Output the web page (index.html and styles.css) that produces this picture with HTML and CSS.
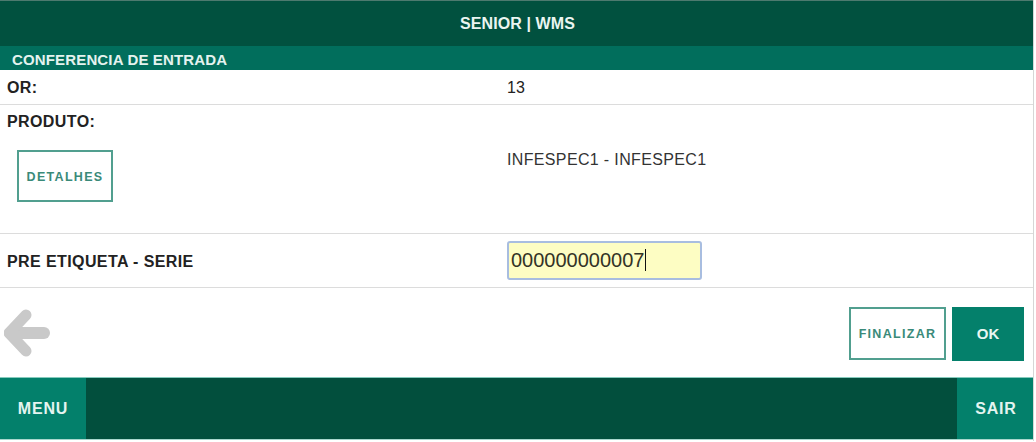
FILE: index.html
```html
<!DOCTYPE html>
<html lang="pt">
<head>
<meta charset="utf-8">
<title>SENIOR | WMS</title>
<link rel="stylesheet" href="styles.css">
</head>
<body>
<div class="app">
  <header class="topbar">SENIOR | WMS</header>
  <div class="section-title">CONFERENCIA DE ENTRADA</div>

  <div class="row row-or">
    <div class="label">OR:</div>
    <div class="value">13</div>
  </div>

  <div class="row row-prod">
    <div class="left">
      <div class="label">PRODUTO:</div>
      <button class="btn-outline btn-detalhes">DETALHES</button>
    </div>
    <div class="value value-prod">INFESPEC1 - INFESPEC1</div>
  </div>

  <div class="row row-etq">
    <div class="label">PRE ETIQUETA - SERIE</div>
    <div class="value">
      <div class="input">000000000007<span class="caret"></span></div>
    </div>
  </div>

  <div class="actions">
    <svg class="back" width="46" height="48" viewBox="0 0 46 48">
      <path d="M15 24 H40" stroke="#c9c9c9" stroke-width="12" stroke-linecap="round" fill="none"/>
      <polyline points="22,6 5,24 22,42" stroke="#c9c9c9" stroke-width="11" stroke-linecap="round" stroke-linejoin="round" fill="none"/>
    </svg>
    <div class="spacer"></div>
    <button class="btn-outline btn-finalizar">FINALIZAR</button>
    <button class="btn-solid btn-ok">OK</button>
  </div>

  <footer class="bottombar">
    <button class="foot-btn btn-menu">MENU</button>
    <div class="spacer"></div>
    <button class="foot-btn btn-sair">SAIR</button>
  </footer>
</div>
</body>
</html>
```

FILE: styles.css
```css
* { box-sizing: border-box; }
html, body {
  margin: 0;
  padding: 0;
  background: #ffffff;
  font-family: "Liberation Sans", Arial, sans-serif;
  color: #222222;
}
.app {
  width: 1034px;
  height: 441px;
  border-right: 1px solid #d6d6d6;
  display: flex;
  flex-direction: column;
}
.topbar {
  height: 46px;
  background: #01513f;
  color: #eaf5f1;
  font-weight: bold;
  font-size: 16px;
  letter-spacing: 0.1px;
  display: flex;
  align-items: center;
  justify-content: center;
  padding-left: 2px;
  border-top: 1px solid #4d7a6f;
}
.section-title {
  height: 24px;
  background: #016e5c;
  color: #e4f3ef;
  font-weight: bold;
  font-size: 15px;
  letter-spacing: 0.15px;
  display: flex;
  align-items: center;
  padding-left: 12px;
  padding-top: 2px;
}
.row {
  display: grid;
  grid-template-columns: 507px 1fr;
  border-bottom: 1px solid #dcdcdc;
}
.label {
  font-weight: bold;
  font-size: 16px;
  line-height: 18px;
  letter-spacing: 0.4px;
  padding-left: 7px;
}
.value {
  font-size: 16px;
  line-height: 18px;
}
.row-or {
  height: 35px;
  align-items: center;
  padding-top: 1px;
}
.row-prod {
  height: 129px;
}
.row-prod .left {
  padding-top: 8px;
  display: flex;
  flex-direction: column;
  align-items: flex-start;
}
.btn-outline {
  background: #ffffff;
  border: 2px solid #519f8f;
  color: #3a8a79;
  font-family: "Liberation Sans", Arial, sans-serif;
  font-weight: bold;
  font-size: 12.5px;
  letter-spacing: 1.3px;
  padding: 0;
}
.btn-detalhes {
  margin-top: 19px;
  margin-left: 17px;
  width: 96px;
  height: 52px;
  padding-top: 2px;
}
.value-prod {
  padding-top: 46px;
  color: #333333;
  letter-spacing: 0.35px;
}
.row-etq {
  height: 54px;
  align-items: center;
}
.row-etq .label { padding-top: 2px; }
.input {
  width: 195px;
  height: 39px;
  margin-top: -1px;
  background: #fdfdc3;
  border: 2px solid #a8bde0;
  border-radius: 3px;
  font-size: 20px;
  color: #333326;
  display: flex;
  align-items: center;
  padding-left: 2px;
}
.caret {
  display: inline-block;
  width: 1px;
  height: 22px;
  background: #111111;
  margin-left: 1px;
}
.actions {
  height: 89px;
  display: flex;
  align-items: center;
  padding-left: 4px;
  padding-right: 9px;
  gap: 6px;
}
.back { margin-top: 1px; }
.spacer { flex: 1; }
.btn-finalizar {
  width: 97px;
  height: 53px;
  margin-top: 1px;
  padding-top: 1px;
}
.btn-solid {
  border: none;
  background: #04806b;
  color: #e8f6f2;
  font-family: "Liberation Sans", Arial, sans-serif;
  font-weight: bold;
  font-size: 15px;
}
.btn-ok {
  width: 72px;
  height: 54px;
  margin-top: 2px;
  padding-top: 1px;
}
.bottombar {
  height: 63px;
  background: #024f3d;
  border-top: 1px solid #86cbbd;
  border-bottom: 1px solid #a9d8ce;
  display: flex;
}
.foot-btn {
  border: none;
  background: #03806b;
  color: #e4f4f0;
  font-family: "Liberation Sans", Arial, sans-serif;
  font-weight: bold;
  font-size: 16px;
  letter-spacing: 0.8px;
  padding: 0;
  height: 100%;
}
.btn-menu { width: 86px; }
.btn-sair { width: 76px; padding-left: 2px; }
```
